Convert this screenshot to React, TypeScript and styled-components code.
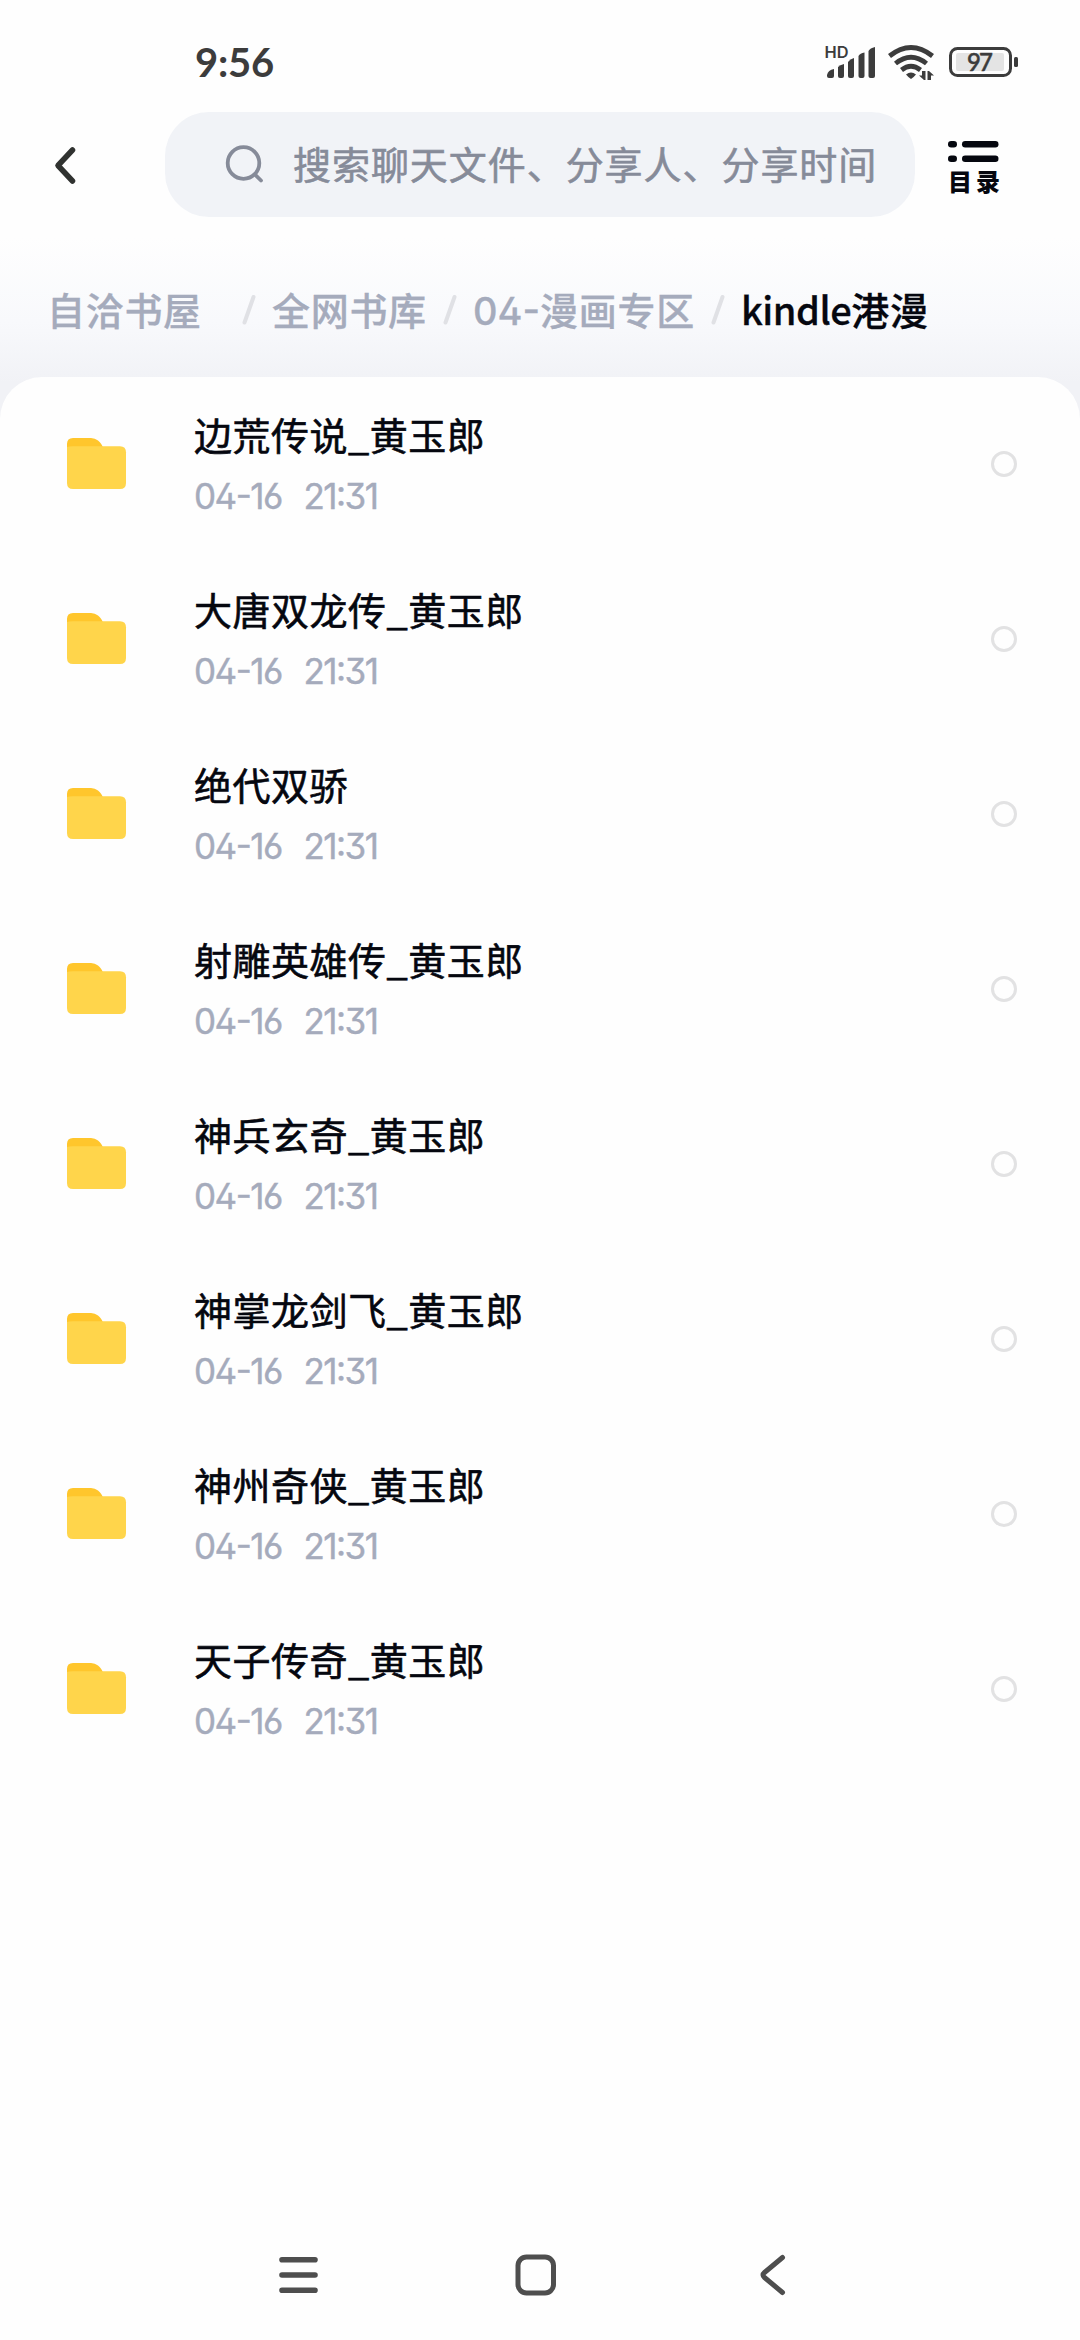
import React from "react";
import styled, { createGlobalStyle } from "styled-components";

const GlobalStyle = createGlobalStyle`
  *, *::before, *::after { box-sizing: border-box; }
  html, body { margin: 0; padding: 0; background: #fefefe; }
  body { font-family: "Noto Sans CJK SC", sans-serif; }
  ul, ol { list-style: none; margin: 0; padding: 0; }
  button { border: 0; padding: 0; background: none; font: inherit; }
  svg { display: block; flex: none; }
`;

const Screen = styled.div`
  width: 1080px;
  height: 2340px;
  display: flex;
  flex-direction: column;
  background: #fefefe;
  overflow: hidden;
`;

const StatusBar = styled.div`
  height: 112px;
  flex: none;
  display: flex;
  justify-content: space-between;
  padding: 39px 60px 0 195px;
  color: #3c3c3c;
`;

const Clock = styled.time`
  height: 46px;
  line-height: 46px;
  font-family: Lato, sans-serif;
  font-size: 40px;
  font-weight: 700;
  letter-spacing: -0.2px;
`;

const Header = styled.header`
  height: 105px;
  flex: none;
  display: flex;
  align-items: center;
`;

const BackButton = styled.button`
  width: 165px;
  height: 105px;
  padding-left: 50px;
  display: flex;
  align-items: center;
`;

const SearchBox = styled.div`
  width: 750px;
  height: 105px;
  border-radius: 44px;
  background: #f1f3f7;
  display: flex;
  align-items: center;
  padding: 0 0 2px 58px;
  gap: 28px;
`;

const Placeholder = styled.span`
  height: 60px;
  line-height: 57px;
  font-size: 38px;
  letter-spacing: 0.95px;
  color: #868b99;
  -webkit-text-stroke: 0.6px #868b99;
  white-space: nowrap;
`;

const CatalogButton = styled.button`
  margin-left: 33px;
  height: 105px;
  display: flex;
  flex-direction: column;
  align-items: flex-start;
  padding-top: 28px;
  gap: 1px;
  color: #05070f;
`;

const CatalogLabel = styled.span`
  height: 32px;
  line-height: 32px;
  font-size: 24px;
  font-weight: 900;
  letter-spacing: 4px;
`;

const Body = styled.main`
  flex: 1;
  display: flex;
  flex-direction: column;
  background: linear-gradient(#fefefe 20px, #f8f9fc 105px, #f1f2f6 165px, #f1f2f6 220px, #fefefe 220px);
`;

const Breadcrumbs = styled.ol`
  height: 160px;
  flex: none;
  display: flex;
  align-items: center;
  padding: 24px 0 0 47px;
`;

const Crumb = styled.li<{ $width: number; $current?: boolean }>`
  width: ${(p) => p.$width}px;
  height: 60px;
  line-height: 60px;
  font-size: 38px;
  font-weight: 500;
  letter-spacing: 0.7px;
  color: ${(p) => (p.$current ? "#05070f" : "#a5abbc")};
  -webkit-text-stroke: 0.3px currentColor;
  white-space: nowrap;
`;

const CrumbNumber = styled.span`
  font-family: Inter, sans-serif;
  font-feature-settings: "ss01", "case";
  letter-spacing: 0;
`;

const CrumbLatin = styled.span`
  letter-spacing: -0.5px;
`;

const Divider = styled.li`
  width: 14px;
  margin-right: 16px;
`;

const Card = styled.ul`
  flex: 1;
  border-radius: 42px 42px 0 0;
  background: #fefefe;
`;

const Row = styled.li`
  height: 175px;
  display: flex;
  align-items: center;
  padding: 0 63px 2px 66px;
`;

const RowText = styled.div`
  flex: 1;
  margin-left: 66px;
  display: flex;
  flex-direction: column;
`;

const FileName = styled.span`
  height: 60px;
  line-height: 60px;
  font-size: 38px;
  letter-spacing: 0.5px;
  color: #05070f;
  -webkit-text-stroke: 0.6px #05070f;
  white-space: nowrap;
`;

const FileDate = styled.time`
  height: 60px;
  line-height: 64px;
  display: flex;
  gap: 21.5px;
  font-family: Inter, sans-serif;
  font-size: 35px;
  font-feature-settings: "ss01", "case";
  letter-spacing: -1.5px;
  color: #a5abbc;
  -webkit-text-stroke: 0.4px #a5abbc;
  white-space: nowrap;
`;

const Radio = styled.span`
  width: 26px;
  height: 26px;
  border-radius: 50%;
  border: 3px solid #e2e2e3;
`;

const NavBar = styled.nav`
  height: 130px;
  flex: none;
  display: flex;
  align-items: center;
  gap: 192px;
  padding-left: 275px;
  color: #4e4e4e;

  & > :last-child {
    margin-left: 8px;
  }
`;

const StatusIcons = () => (
  <svg width="200" height="46" viewBox="820 39 200 46" fill="none">
    <text x="824.500" y="57.500" fontFamily="Inter, sans-serif" fontSize="16" fontWeight="600" fill="#3c3c3c" textLength="24" lengthAdjust="spacingAndGlyphs">HD</text>
    <g fill="#3c3c3c">
      <path d="M827 76V75Q828 70 834 69V76Q834 78 832 78H829Q827 78 827 76Z" />
      <path d="M838 67Q840 65 844 64V76Q844 78 842 78H840Q838 78 838 76Z" />
      <path d="M848 62Q850 59 854 58V76Q854 78 852 78H850Q848 78 848 76Z" />
      <path d="M858.500 56Q860 53 864.500 52.500V76Q864.500 78 862.500 78H860.500Q858.500 78 858.500 76Z" />
      <path d="M868.500 51Q870 48 875 47V76Q875 78 873 78H870.500Q868.500 78 868.500 76Z" />
      <path d="M906 74.500Q911 70.500 916 74.500Q914 77 911 79Q908 77 906 74.500Z" />
      <path d="M925.500 71V80H924L919 75.500H922V71ZM927.500 80V71H929L934 75.500H931V80Z" />
    </g>
    <g stroke="#3c3c3c" strokeWidth="4.800">
      <path d="M889.500 56Q911 39 932.500 56" />
      <path d="M895.500 63.500Q911 51 926.500 63.500" />
      <path d="M901.500 70Q911 62.500 920.500 70" />
    </g>
    <rect x="950.500" y="48.500" width="60" height="27" rx="7" stroke="#3c3c3c" strokeWidth="3" />
    <rect x="956" y="53" width="48" height="18" rx="2" fill="#e4e4e4" />
    <rect x="1014" y="57" width="4" height="10" rx="1.500" fill="#3c3c3c" />
    <text x="967" y="71" fontFamily="Lato, sans-serif" fontSize="24" fontWeight="500" fill="#3c3c3c" stroke="#3c3c3c" strokeWidth="0.5" textLength="26">97</text>
  </svg>
);

const BackIcon = () => (
  <svg width="30" height="44" viewBox="0 0 30 44" fill="none" stroke="#303230" strokeWidth="5.500" strokeLinecap="round" strokeLinejoin="round">
    <path d="M22.500 7L8 22.500L22.500 38" />
  </svg>
);

const SearchIcon = () => (
  <svg width="42" height="42" viewBox="0 0 42 42" fill="none" stroke="#868b99" strokeWidth="3.800" strokeLinecap="round">
    <circle cx="20.500" cy="20" r="15.800" />
    <path d="M32 31.500L38 37.500" />
  </svg>
);

const CatalogIcon = () => (
  <svg width="52" height="24" viewBox="0 0 52 24" fill="currentColor">
    <rect x="0" y="1" width="9" height="6.500" rx="3.200" />
    <rect x="14" y="1" width="36.500" height="6.500" rx="3.200" />
    <rect x="0" y="15.500" width="9" height="6.500" rx="3.200" />
    <rect x="14" y="15.500" width="36.500" height="6.500" rx="3.200" />
  </svg>
);

const Slash = () => (
  <svg width="14" height="34" viewBox="0 0 14 34">
    <path d="M11.500 5L2.500 30.500" stroke="#e0e1e5" strokeWidth="4" strokeLinecap="round" />
  </svg>
);

const FolderIcon = () => (
  <svg width="62" height="54" viewBox="0 0 62 54">
    <path d="M1 18V7Q1 1 7 1H25Q29 1 32 3.500Q36 6.500 37.500 12V18Z" fill="#ffc62c" />
    <path d="M1 10Q3 9.300 7 9.300H54Q60 9.300 60 15.300V46Q60 52 54 52H7Q1 52 1 46Z" fill="#ffd54b" />
  </svg>
);

const MenuIcon = () => (
  <svg width="46" height="44" viewBox="0 0 46 44" stroke="currentColor" strokeWidth="5.600" strokeLinecap="round">
    <path d="M7 6.700H40M7 22H40M7 37.300H40" />
  </svg>
);

const HomeIcon = () => (
  <svg width="46" height="44" viewBox="0 0 46 44" fill="none" stroke="currentColor" strokeWidth="5">
    <rect x="5" y="4" width="35.500" height="36" rx="8.500" />
  </svg>
);

const NavBackIcon = () => (
  <svg width="30" height="44" viewBox="0 0 30 44" fill="none" stroke="currentColor" strokeWidth="5" strokeLinecap="round" strokeLinejoin="round">
    <path d="M23.500 4.500L5.500 19.500Q2.500 22 5.500 24.500L23.500 39.500" />
  </svg>
);

const folders = [
  "边荒传说_黄玉郎",
  "大唐双龙传_黄玉郎",
  "绝代双骄",
  "射雕英雄传_黄玉郎",
  "神兵玄奇_黄玉郎",
  "神掌龙剑飞_黄玉郎",
  "神州奇侠_黄玉郎",
  "天子传奇_黄玉郎",
];

export default function App() {
  return (
    <>
      <GlobalStyle />
      <Screen>
        <StatusBar>
          <Clock>9:56</Clock>
          <StatusIcons />
        </StatusBar>
        <Header>
          <BackButton><BackIcon /></BackButton>
          <SearchBox>
            <SearchIcon />
            <Placeholder>搜索聊天文件、分享人、分享时间</Placeholder>
          </SearchBox>
          <CatalogButton>
            <CatalogIcon />
            <CatalogLabel>目录</CatalogLabel>
          </CatalogButton>
        </Header>
        <Body>
          <Breadcrumbs>
            <Crumb $width={195}>自洽书屋</Crumb>
            <Divider><Slash /></Divider>
            <Crumb $width={171}>全网书库</Crumb>
            <Divider><Slash /></Divider>
            <Crumb $width={238}><CrumbNumber>04-</CrumbNumber>漫画专区</Crumb>
            <Divider><Slash /></Divider>
            <Crumb $width={200} $current><CrumbLatin>kindle</CrumbLatin>港漫</Crumb>
          </Breadcrumbs>
          <Card>
            {folders.map((name) => (
              <Row key={name}>
                <FolderIcon />
                <RowText>
                  <FileName>{name}</FileName>
                  <FileDate>
                    <span>04-16</span>
                    <span>21:31</span>
                  </FileDate>
                </RowText>
                <Radio />
              </Row>
            ))}
          </Card>
        </Body>
        <NavBar>
          <MenuIcon />
          <HomeIcon />
          <NavBackIcon />
        </NavBar>
      </Screen>
    </>
  );
}
